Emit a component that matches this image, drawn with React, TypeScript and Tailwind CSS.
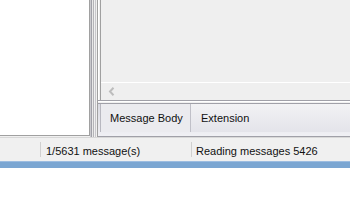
import React from 'react';

export default function App() {
  return (
    <div className="w-[350px] h-[200px] overflow-hidden bg-white flex flex-col text-[11px] text-[#101010]" style={{ fontFamily: '"Liberation Sans", Arial, sans-serif' }}>
      <div className="h-[137px] flex bg-[#f0f0f0]">
        {/* left list */}
        <div className="w-[92px] h-[136px] bg-white border-r border-b border-[#a0a0a0]" />
        {/* splitter */}
        <div className="w-[8px] flex">
          <div className="w-px bg-[#c8c8cc]" />
          <div className="w-px bg-[#a0a0a8]" />
          <div className="w-px bg-[#e8e8e8]" />
          <div className="w-px bg-[#b4b4b8]" />
          <div className="w-px bg-[#f0f0f0]" />
          <div className="w-px bg-[#c8c8cc]" />
          <div className="w-px bg-[#f0f0f0]" />
          <div className="w-px bg-[#a0a0a0]" />
        </div>
        {/* right pane */}
        <div className="flex-1 flex flex-col">
          <div className="h-[100px] flex">
            <div className="w-px bg-white" />
            <div className="w-px bg-[#f0f0f0]" />
            <div className="w-px bg-[#a0a0a0]" />
            <div className="flex-1 flex flex-col bg-[#efefef]">
              <div className="h-[82px]" />
              <div className="h-px bg-white" />
              <div className="flex-1 flex items-center pl-[7px]">
                <svg width="7" height="9" viewBox="0 0 7 9">
                  <path d="M5.5 0.8 L2 4.5 L5.5 8.2" stroke="#bdbdbd" strokeWidth="2" fill="none" />
                </svg>
              </div>
            </div>
          </div>
          <div className="h-px bg-[#a0a0a8]" />
          <div className="h-px bg-white" />
          <div className="h-px bg-[#f0f0f0]" />
          <div className="h-px bg-[#a0a0a8]" />
          {/* tab bar */}
          <div className="flex-1 flex bg-gradient-to-b from-[#dadbe2] to-[#f0f0f4] pl-[2px]">
            <div className="w-[90px] h-[28px] flex items-center pl-[9px] bg-[#ebebef] border-l border-[#b8b8c0]">
              Message Body
            </div>
            <div className="w-[160px] h-[28px] flex items-center pl-[10px] bg-gradient-to-b from-[#f2f2f4] to-[#e4e4ea] border-l border-[#c0c0c8]">
              Extension
            </div>
          </div>
          <div className="h-px bg-[#a0a0a8]" />
        </div>
      </div>
      {/* status bar */}
      <div className="h-[24px] flex bg-[#f0f0f0] border-t border-[#d8d8d8]">
        <div className="w-[41px] h-full flex justify-end py-[4px]">
          <div className="w-px bg-[#d0d0d0]" />
        </div>
        <div className="w-[150px] h-full flex items-center pl-[5px] pt-[3px]">1/5631 message(s)</div>
        <div className="h-full flex py-[4px]">
          <div className="w-px bg-[#d0d0d0]" />
        </div>
        <div className="flex-1 h-full flex items-center pl-[4px] pt-[3px]">Reading messages 5426</div>
      </div>
      <div className="h-[7px] bg-[#7ba6d2] border-t border-[#9cbce0]" />
      <div className="flex-1 bg-white" />
    </div>
  );
}
